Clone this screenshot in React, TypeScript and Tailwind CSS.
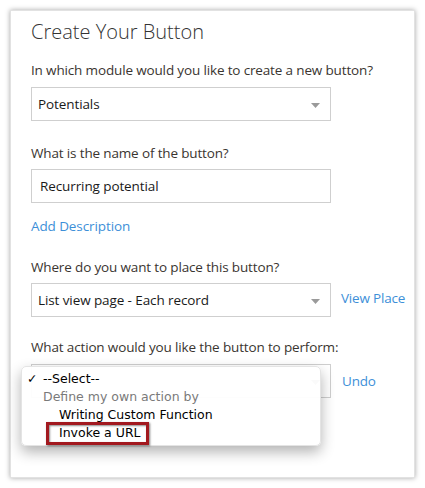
import React from 'react';

const FONT = { fontFamily: '"Open Sans", "Liberation Sans", sans-serif' };
const MAC_FONT = { fontFamily: '"DejaVu Sans", "Liberation Sans", sans-serif' };

function Caret() {
  return (
    <svg width="9" height="5" viewBox="0 0 9 5" className="absolute right-[10px] top-[15px]">
      <path d="M0 0 L9 0 L4.5 5 Z" fill="#9a9a9a" />
    </svg>
  );
}

function Field({ value, select = false, indent = 6 }: { value?: string; select?: boolean; indent?: number }) {
  return (
    <div
      className="relative h-[34px] w-[300px] border border-[#cfcfcf] bg-white flex items-center"
      style={{ paddingLeft: indent }}
    >
      {value && <span className="text-[13.5px] tracking-[-0.1px] text-[#1a1a1a]">{value}</span>}
      {select && <Caret />}
    </div>
  );
}

export default function App() {
  return (
    <div className="w-[425px] h-[488px] bg-white pt-[10px] pl-[10px]" style={FONT}>
      <div className="relative w-[405px] h-[468px] bg-white border border-[#e2e2e2] shadow-[0_0_5px_rgba(0,0,0,0.35)] pl-[20px] pt-[7px]">
        <h1 className="text-[20px] leading-[28px] font-light text-[#333]">Create Your Button</h1>

        <p className="mt-[14px] text-[13.5px] tracking-[-0.15px] leading-[20px] text-[#3a3530]">
          In which module would you like to create a new button?
        </p>
        <div className="mt-[7px]">
          <Field value="Potentials" select />
        </div>

        <p className="mt-[22px] text-[13.5px] tracking-[-0.15px] leading-[20px] text-[#3a3530]">
          What is the name of the button?
        </p>
        <div className="mt-[6px]">
          <Field value="Recurring potential" indent={8} />
        </div>

        <p className="mt-[13px] text-[13.5px] tracking-[-0.1px] leading-[20px] text-[#3d8fd8]">Add Description</p>

        <p className="mt-[21px] text-[13.5px] tracking-[-0.15px] leading-[20px] text-[#3a3530]">
          Where do you want to place this button?
        </p>
        <div className="mt-[6px] flex items-center gap-[10px]">
          <Field value="List view page - Each record" select />
          <span className="text-[13.5px] tracking-[-0.2px] text-[#3d8fd8] -mt-[3px]">View Place</span>
        </div>

        <p className="mt-[20px] text-[13.5px] tracking-[-0.15px] leading-[20px] text-[#3a3530]">
          What action would you like the button to perform:
        </p>
        <div className="mt-[7px] flex items-center gap-[11px]">
          <Field select />
          <span className="text-[13.5px] tracking-[-0.2px] text-[#3d8fd8]">Undo</span>
        </div>

        {/* native select popup */}
        <div
          className="absolute left-[10px] top-[355px] w-[300px] h-[80px] rounded-[5px] bg-white/95 border border-[#e4e4e4] shadow-[0_6px_14px_rgba(0,0,0,0.3)] pt-[3px] text-[12.5px] leading-[18px] text-black"
          style={MAC_FONT}
        >
          <div className="flex">
            <span className="w-[21px] pl-[5px] font-bold">✓</span>
            <span>--Select--</span>
          </div>
          <div className="pl-[21px] text-[#7a7a7a]">Define my own action by</div>
          <div className="pl-[37px]">Writing Custom Function</div>
          <div className="relative pl-[37px]">
            Invoke a URL
            <div className="absolute left-[24px] top-[-2px] w-[103px] h-[23px] border-[3px] border-[#a2191f] shadow-[1px_1px_2px_rgba(0,0,0,0.5),inset_1px_1px_2px_rgba(0,0,0,0.45)]" />
          </div>
        </div>
      </div>
    </div>
  );
}
